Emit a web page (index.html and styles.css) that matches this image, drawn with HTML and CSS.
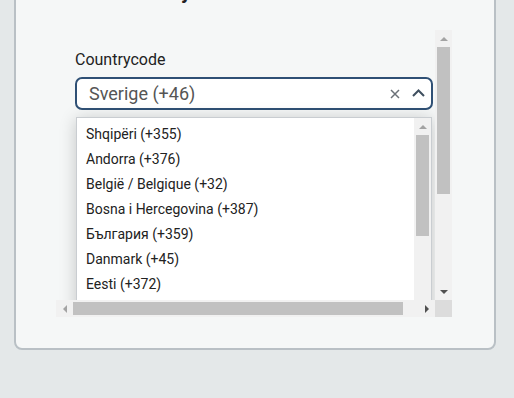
FILE: index.html
```html
<!DOCTYPE html>
<html lang="en">
<head>
  <meta charset="UTF-8">
  <meta name="viewport" content="width=device-width, initial-scale=1.0">
  <title>Your country</title>
  <link rel="stylesheet" href="styles.css">
</head>
<body>
  <div class="card">
    <h2 class="card-title">Your country</h2>

    <div class="form-frame">
      <div class="form-view">
        <div class="form-inner">
          <label class="field-label">Countrycode</label>
          <div class="select-box">
            <span class="select-value">Sverige (+46)</span>
            <span class="select-clear">
              <svg width="10" height="10" viewBox="0 0 10 10"><path d="M1 1 L9 9 M9 1 L1 9" stroke="#6b7178" stroke-width="1.5" fill="none"/></svg>
            </span>
            <span class="select-arrow">
              <svg width="13" height="8" viewBox="0 0 13 8"><polyline points="1,7 6.5,1.5 12,7" stroke="#3f4f5f" stroke-width="2" fill="none"/></svg>
            </span>
          </div>

          <div class="select-list">
            <ul class="list-items" id="country-list"></ul>
            <div class="vbar">
              <span class="sb-btn"><i class="arrow-up"></i></span>
              <div class="sb-track"><div class="sb-thumb list-thumb"></div></div>
              <span class="sb-btn"><i class="arrow-down"></i></span>
            </div>
          </div>
        </div>
      </div>

      <!-- scrollbars of the form area -->
      <div class="vbar">
        <span class="sb-btn"><i class="arrow-up"></i></span>
        <div class="sb-track"><div class="sb-thumb form-thumb-v"></div></div>
        <span class="sb-btn"><i class="arrow-down"></i></span>
      </div>
      <div class="hbar">
        <span class="sb-btn"><i class="arrow-left"></i></span>
        <div class="sb-track"><div class="sb-thumb form-thumb-h"></div></div>
        <span class="sb-btn"><i class="arrow-right"></i></span>
      </div>
      <div class="sb-corner"></div>
    </div>
  </div>

  <script>
    const countries = [
      'Shqipëri (+355)', 'Andorra (+376)', 'België / Belgique (+32)', 'Bosna i Hercegovina (+387)',
      'България (+359)', 'Danmark (+45)', 'Eesti (+372)', 'Suomi (+358)', 'France (+33)',
      'Deutschland (+49)', 'Ελλάδα (+30)', 'Magyarország (+36)', 'Ísland (+354)', 'Éire / Ireland (+353)'
    ];
    const list = document.getElementById('country-list');
    countries.forEach(name => {
      const li = document.createElement('li');
      li.textContent = name;
      list.appendChild(li);
    });
  </script>
</body>
</html>
```

FILE: styles.css
```css
body {
  font-family: Roboto, "Liberation Sans", sans-serif;
  background-color: #e4e8e9;
  margin: 0;
  padding: 0;
  overflow: hidden;
}

.card {
  width: 478px;
  margin: -40px 0 0 14px;
  background: #f5f7f7;
  border: 2px solid #b9c0c5;
  border-radius: 8px;
  padding: 18px 0 31px 0;
}

.card-title {
  margin: 0 0 26px 60px;
  font-size: 20px;
  line-height: 24px;
  font-weight: bold;
  color: #222;
}

/* form area with its own scrollbars */
.form-frame {
  display: grid;
  grid-template-columns: 379px 17px;
  grid-template-rows: 270px 17px;
  width: 396px;
  margin-left: 40px;
}

.form-view {
  overflow: hidden;
}

.form-inner {
  position: relative;
  width: 358px;
  padding: 20px 0 0 19px;
}

.field-label {
  display: block;
  font-size: 16px;
  line-height: 20px;
  color: #222;
  margin-bottom: 7px;
}

.select-box {
  display: flex;
  align-items: center;
  height: 33px;
  box-sizing: border-box;
  border: 2px solid #2f5075;
  border-radius: 7px;
  background: #fff;
  padding: 0 6px 0 12px;
}

.select-value {
  flex-grow: 1;
  font-size: 18px;
  color: #555;
}

.select-clear {
  display: flex;
  margin-right: 12px;
}

.select-arrow {
  display: flex;
  margin-top: -2px;
}

/* open dropdown */
.select-list {
  position: absolute;
  top: 87px;
  left: 20px;
  width: 356px;
  height: 346px;
  box-sizing: border-box;
  display: flex;
  background: #fff;
  border: 1px solid #c9cdd1;
  box-shadow: 0 2px 16px rgba(0, 0, 0, 0.2);
  z-index: 5;
}

.list-items {
  flex-grow: 1;
  margin: 0;
  padding: 4px 0;
  list-style: none;
  overflow: hidden;
}

.list-items li {
  height: 25px;
  line-height: 25px;
  padding-left: 9px;
  font-size: 14px;
  color: #222;
  white-space: nowrap;
}

/* classic scrollbars */
.vbar,
.hbar {
  display: flex;
  background: #f1f1f1;
}

.vbar {
  flex-direction: column;
  width: 17px;
  flex-shrink: 0;
}

.hbar {
  height: 17px;
}

.sb-btn {
  display: flex;
  align-items: center;
  justify-content: center;
  width: 17px;
  height: 17px;
  flex-shrink: 0;
}

.sb-track {
  flex-grow: 1;
  display: flex;
}

.vbar .sb-track {
  flex-direction: column;
}

.sb-thumb {
  background: #c1c1c1;
}

.vbar .sb-thumb {
  width: 13px;
  margin: 0 2px;
}

.hbar .sb-thumb {
  height: 13px;
  margin: 2px 0;
}

.list-thumb {
  height: 101px;
}

.form-thumb-v {
  height: 147px;
}

.form-thumb-h {
  width: 330px;
}

.sb-corner {
  background: #dcdcdc;
}

.arrow-up,
.arrow-down {
  border-left: 4px solid transparent;
  border-right: 4px solid transparent;
}

.arrow-up {
  border-bottom: 4px solid #a3a3a3;
}

.arrow-down {
  border-top: 4px solid #505050;
}

.arrow-left,
.arrow-right {
  border-top: 4px solid transparent;
  border-bottom: 4px solid transparent;
}

.arrow-left {
  border-right: 4px solid #a3a3a3;
}

.arrow-right {
  border-left: 4px solid #505050;
}
```
